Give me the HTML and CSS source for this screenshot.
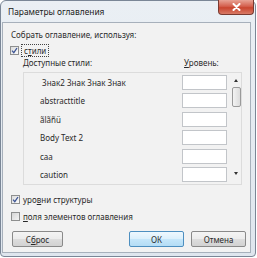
FILE: index.html
```html
<!DOCTYPE html>
<html lang="ru">
<head>
<meta charset="utf-8">
<title>Параметры оглавления</title>
<link rel="stylesheet" href="styles.css">
</head>
<body>
<div class="window">
  <div class="titlebar">
    <span class="title">Параметры оглавления</span>
    <div class="close"><svg width="9" height="8" viewBox="0 0 9 8"><path d="M1.5 1 L7.5 7 M7.5 1 L1.5 7" stroke="#fff" stroke-width="2" stroke-linecap="round"/></svg></div>
  </div>
  <div class="client">
    <div class="line">Собрать оглавление, используя:</div>
    <div class="check">
      <span class="box"><svg width="7" height="7" viewBox="0 0 7 7"><path d="M1 3.6 L2.8 5.6 L6 1" fill="none" stroke="#3d5595" stroke-width="1.3"/></svg></span>
      <span class="focus">с<u>т</u>или</span>
    </div>
    <div class="head">
      <span class="head-name">Доступные стили:</span>
      <span><u>У</u>ровень:</span>
    </div>
    <div class="list">
      <div class="rows">
        <div class="row"><span class="name">&nbsp;Знак2 Знак Знак Знак</span><span class="level"></span></div>
        <div class="row"><span class="name">abstracttitle</span><span class="level"></span></div>
        <div class="row"><span class="name">ãlãñü</span><span class="level"></span></div>
        <div class="row"><span class="name">Body Text 2</span><span class="level"></span></div>
        <div class="row"><span class="name">caa</span><span class="level"></span></div>
        <div class="row"><span class="name">caution</span><span class="level"></span></div>
      </div>
      <div class="scrollbar">
        <span class="arrow-up"></span>
        <span class="thumb"></span>
        <span class="spacer"></span>
        <span class="arrow-down"></span>
      </div>
    </div>
    <div class="check check-struct">
      <span class="box"><svg width="7" height="7" viewBox="0 0 7 7"><path d="M1 3.6 L2.8 5.6 L6 1" fill="none" stroke="#3d5595" stroke-width="1.3"/></svg></span>
      <span>уро<u>в</u>ни структуры</span>
    </div>
    <div class="check check-fields">
      <span class="box"></span>
      <span><u>п</u>оля элементов оглавления</span>
    </div>
    <div class="buttons">
      <button class="btn btn-reset">С<u>б</u>рос</button>
      <div class="btn-group">
        <button class="btn btn-default">ОК</button>
        <button class="btn">Отмена</button>
      </div>
    </div>
  </div>
</div>
</body>
</html>
```

FILE: styles.css
```css
* { box-sizing: border-box; }
html, body { margin: 0; padding: 0; }
body {
  width: 257px;
  height: 258px;
  background: #ffffff;
  font-family: "Noto Sans", "Open Sans", sans-serif;
  font-size: 8px;
  color: #2a2a2a;
  overflow: hidden;
}
.window {
  width: 256px;
  height: 257px;
  border: 1px solid #7a8696;
  border-radius: 6px 6px 4px 4px;
  background: linear-gradient(#eaeff4, #dfe6ee);
  padding: 0 4px 3px 1px;
  display: flex;
  flex-direction: column;
}
.titlebar {
  height: 21px;
  display: flex;
  align-items: flex-start;
  margin-right: -4px;
}
.title {
  padding-left: 6px;
  line-height: 22px;
  font-size: 8.4px;
  color: #1a1a1a;
  flex: 1;
}
.close {
  width: 36px;
  height: 15px;
  margin-top: -1px;
  margin-right: 1px;
  border: 1px solid #7a3a30;
  border-top: none;
  border-radius: 0 0 4px 4px;
  background: linear-gradient(#e8a395, #d4604e 45%, #c9452f 55%, #d87a66);
  display: flex;
  align-items: center;
  justify-content: center;
}
.client {
  flex: 1;
  border: 1px solid #a7b0bb;
  background: #f2f2f2;
  padding: 4px 4px 4px 7px;
  display: flex;
  flex-direction: column;
}
.line {
  height: 16px;
  line-height: 16px;
  padding-left: 1px;
}
.check {
  height: 14px;
  display: flex;
  align-items: center;
}
.box {
  width: 9px;
  height: 9px;
  border: 1px solid #8e8f8f;
  background: linear-gradient(135deg, #dcdcdc, #fbfbfb);
  display: flex;
  align-items: center;
  justify-content: center;
  margin-right: 3px;
}
.focus {
  outline: 1px dotted #444;
  padding: 0 2px;
  line-height: 11px;
}
.head {
  height: 12px;
  line-height: 12px;
  display: flex;
  padding-left: 13px;
}
.head-name { width: 161px; }
.list {
  margin: 3px 4px 0 13px;
  height: 113px;
  border: 1px solid #dcdcdc;
  display: grid;
  grid-template-columns: 1fr 12px;
}
.rows {
  display: flex;
  flex-direction: column;
}
.row {
  height: 18.5px;
  display: flex;
  align-items: center;
}
.name {
  flex: 1;
  padding-left: 16px;
}
.level {
  width: 45px;
  height: 15px;
  border: 1px solid #c2c5c9;
  background: #fff;
  margin-right: 2px;
}
.scrollbar {
  display: flex;
  flex-direction: column;
  align-items: center;
  padding: 6px 0 9px;
}
.arrow-up {
  width: 0; height: 0;
  border-left: 2px solid transparent;
  border-right: 2px solid transparent;
  border-bottom: 3px solid #333;
  margin-left: 2px;
}
.thumb {
  width: 9px;
  height: 20px;
  margin-top: 5px;
  margin-left: 2px;
  border: 1px solid #9a9a9a;
  border-radius: 2px;
  background: linear-gradient(90deg, #f3f3f3, #dcdcdc);
}
.spacer { flex: 1; }
.arrow-down {
  width: 0; height: 0;
  border-left: 2px solid transparent;
  border-right: 2px solid transparent;
  border-top: 3px solid #333;
  margin-left: 2px;
}
.check-struct { margin-top: 7px; padding-left: 1px; }
.check-fields { margin-top: 3px; padding-left: 1px; }
.check-fields .box { background: linear-gradient(135deg, #d6d6d6, #f4f4f4); }
.buttons {
  margin-top: 8px;
  height: 16px;
  display: flex;
  justify-content: space-between;
}
.btn {
  font-family: inherit;
  font-size: 8px;
  color: #2a2a2a;
  width: 55px;
  height: 16px;
  padding: 0;
  border: 1px solid #8a8a8a;
  border-radius: 2px;
  background: linear-gradient(#f4f4f4 0%, #ececec 48%, #dddddd 52%, #d2d2d2 100%);
}
.btn-reset { width: 51px; margin-left: 2px; }
.btn-group { display: flex; gap: 7px; }
.btn-default {
  border-color: #4d8fc0;
  background: linear-gradient(#eef8fe 0%, #dcf0fc 48%, #c5e6fa 52%, #b4dcf5 100%);
}
```
